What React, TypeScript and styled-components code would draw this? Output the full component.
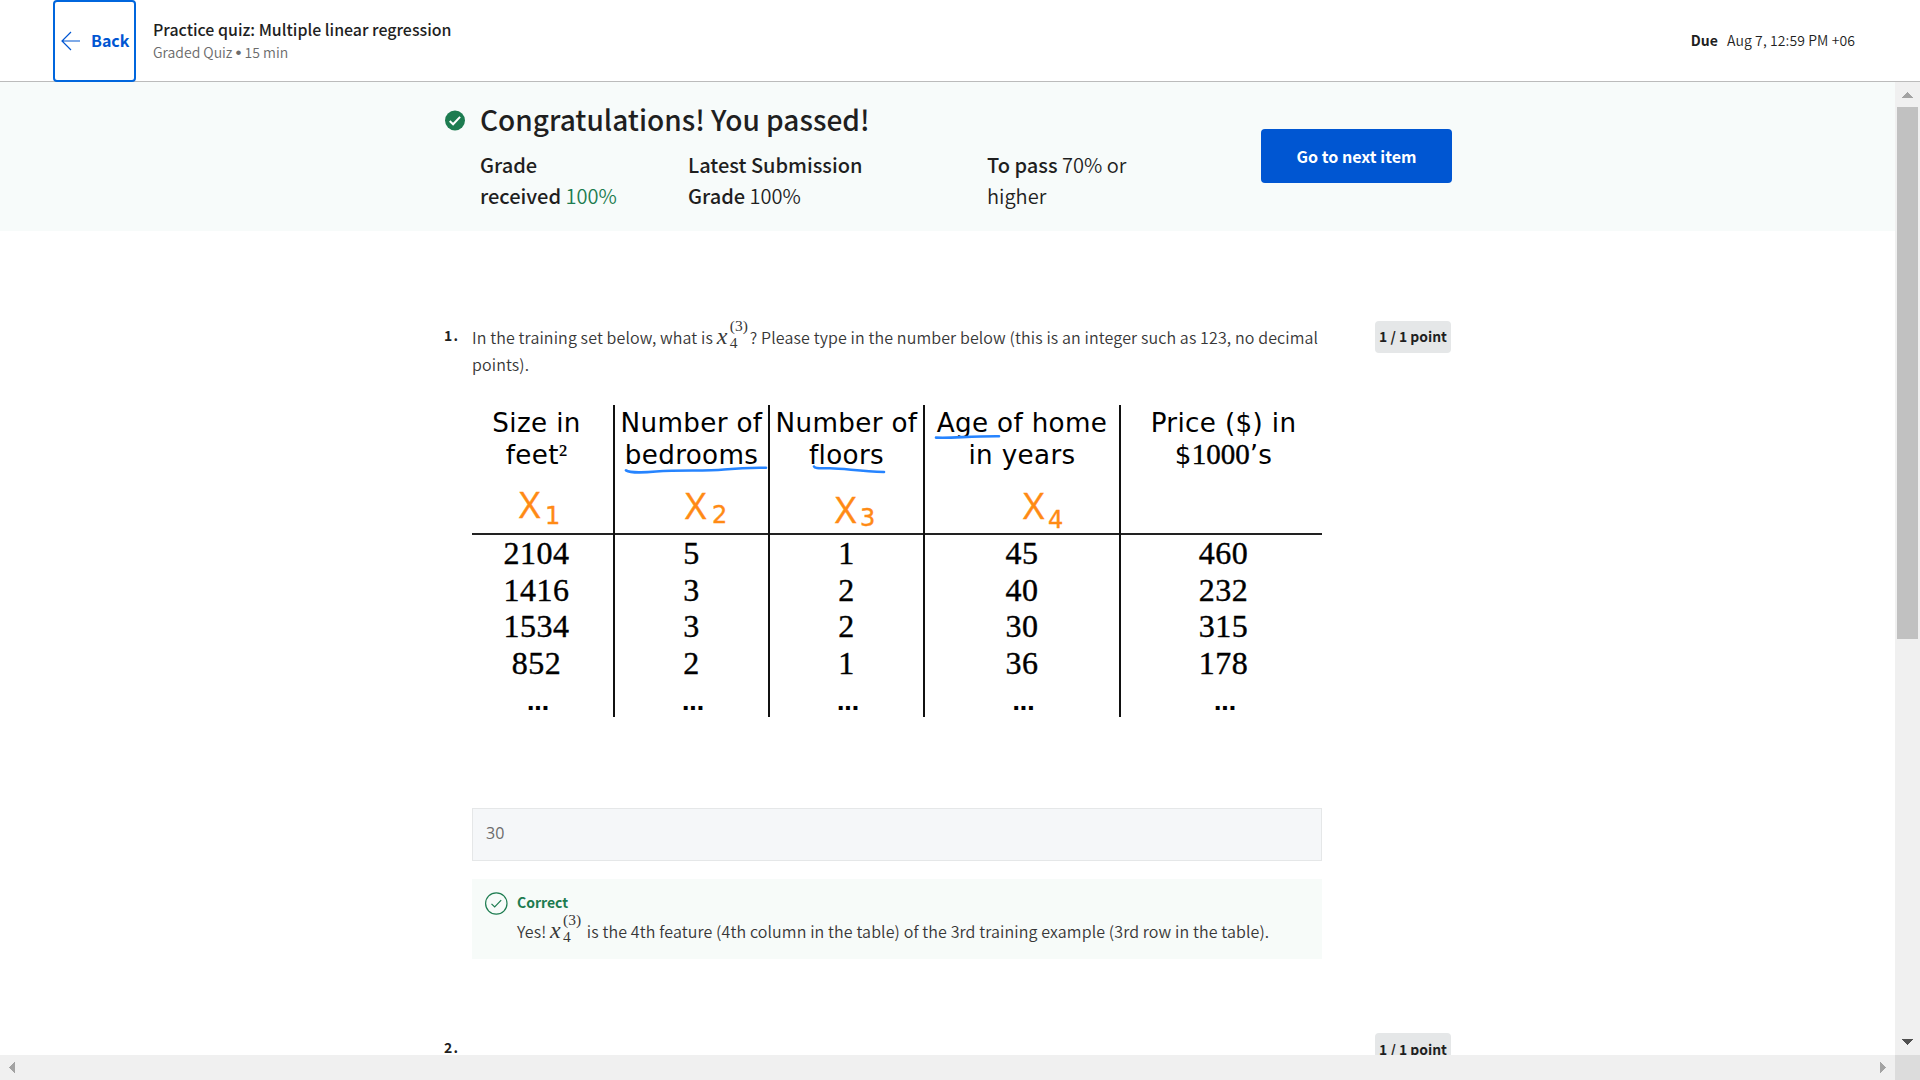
import React from "react";
import styled, { createGlobalStyle } from "styled-components";

const sans = `"Noto Sans CJK SC", "Noto Sans", sans-serif`;
const figure = `"DejaVu Sans", Verdana, sans-serif`;
const serif = `"Liberation Serif", "Times New Roman", serif`;

const GlobalStyle = createGlobalStyle`
  * { box-sizing: border-box; }
  html, body { margin: 0; padding: 0; overflow: hidden; background: #fff; }
  body { font-family: ${sans}; color: #1f1f1f; }
`;

const Page = styled.div`
  width: 1920px;
  height: 1080px;
  display: flex;
  flex-direction: column;
  overflow: hidden;
`;

const Header = styled.header`
  flex: none;
  height: 82px;
  display: flex;
  align-items: center;
  padding: 0 65px 0 53px;
  border-bottom: 1px solid #bbbbbb;
`;

const BackButton = styled.button`
  width: 83px;
  height: 82px;
  margin: 0 17px -1px 0;
  padding: 0 0 1px 6px;
  display: flex;
  align-items: center;
  gap: 10px;
  background: #fff;
  border: 2px solid #0066dd;
  border-radius: 4px;
  color: #0056d2;
  font: 700 16px/23px ${sans};
`;

const Titles = styled.div`
  flex: 1;
`;

const QuizTitle = styled.div`
  font-size: 15.95px;
  line-height: 24px;
  font-weight: 500;
`;

const QuizMeta = styled.div`
  font-size: 14px;
  line-height: 23px;
  color: #6b6b6b;
  font-weight: 350;
`;

const Bullet = styled.span`
  font-family: "Liberation Sans", sans-serif;
  font-size: 17px;
  line-height: 0;
`;

const Due = styled.div`
  display: flex;
  gap: 9px;
  padding-bottom: 1px;
  font-size: 14px;
  line-height: 24px;
  font-weight: 350;
  letter-spacing: 0.1px;
`;

const Strong = styled.strong`
  font-weight: 700;
`;

const Workspace = styled.div`
  flex: 1;
  min-height: 0;
  display: grid;
  grid-template-columns: 1895px 25px;
  grid-template-rows: 973px 25px;
`;

const Viewport = styled.main`
  overflow: hidden;
`;

const Banner = styled.section`
  height: 149px;
  display: flex;
  align-items: center;
  padding: 0 0 1px 445px;
  background: #f7fbfa;
`;

const BannerIcon = styled.div`
  width: 20px;
  height: 110px;
  margin-right: 15px;
  padding-top: 9px;
  svg { display: block; }
`;

const BannerBody = styled.div`
  width: 781px;
`;

const BannerTitle = styled.h1`
  margin: -1px 0 12px;
  font-size: 28.04px;
  line-height: 36px;
  font-weight: 500;
`;

const Grades = styled.div`
  display: grid;
  grid-template-columns: 208px 299px 200px;
  font-size: 20.05px;
  line-height: 31px;
  font-weight: 350;
`;

const GradeLabel = styled.span`
  font-weight: 500;
`;

const Passed = styled.span`
  color: #1d7c50;
`;

const NextButton = styled.button`
  width: 191px;
  height: 54px;
  padding: 0;
  border: 0;
  border-radius: 4px;
  background: #0056d2;
  color: #fff;
  font: 700 16.1px/24px ${sans};
`;

const Question = styled.section<{ $top: number }>`
  display: grid;
  grid-template-columns: 28px 850px 53px 76px;
  padding: ${(p) => p.$top}px 0 0 444px;
`;

const QuestionNumber = styled.div`
  padding-top: 2px;
  font-size: 14px;
  line-height: 24px;
  font-weight: 700;
  letter-spacing: 1.2px;
`;

const Badge = styled.div<{ $line?: number }>`
  grid-column: 4;
  height: 32px;
  border-radius: 4px;
  background: #e5e7e8;
  text-align: center;
  font-size: 13.9px;
  line-height: ${(p) => p.$line ?? 31}px;
  font-weight: 700;
  white-space: nowrap;
`;

const Prompt = styled.p`
  margin: 0;
  padding-top: 3px;
  font-size: 16px;
  line-height: 27px;
  font-weight: 350;
  letter-spacing: 0.12px;
  color: #373737;
`;

const MathBox = styled.span`
  display: inline-flex;
  height: 20px;
  margin: 0 2px 0 0;
  vertical-align: baseline;
  font-family: ${serif};
  letter-spacing: 0;
  line-height: 20px;
`;

const MathVar = styled.i`
  width: 13px;
  font-size: 24px;
`;

const Scripts = styled.span`
  display: inline-flex;
  flex-direction: column;
  gap: 2px;
  margin: -8px 0 -4px;
  font-size: 15.5px;
  line-height: 15px;
`;

const Figure = styled.div`
  position: relative;
  height: 312px;
  margin-top: 27px;
  display: grid;
  grid-template-columns: 143px 155px 155px 196px 201px;
  color: #000;
`;

const Column = styled.div<{ $last?: boolean }>`
  height: 312px;
  border-right: ${(p) => (p.$last ? "0" : "2px solid #111")};
  text-align: center;
`;

const ColumnHead = styled.div<{ $right: number; $left: number }>`
  height: 130px;
  padding: 3px ${(p) => p.$right}px 0 ${(p) => p.$left}px;
  border-bottom: 2px solid #222;
  font-family: ${figure};
  font-size: 26.2px;
  line-height: 31.5px;
  letter-spacing: 0.35px;
  white-space: nowrap;
`;

const SerifPart = styled.span<{ $size: number; $stroke: number }>`
  font-family: ${serif};
  font-size: ${(p) => p.$size}px;
  line-height: 0;
  letter-spacing: 0;
  -webkit-text-stroke: ${(p) => p.$stroke}px #000;
`;

const Value = styled.div<{ $right: number; $left: number }>`
  height: 36.7px;
  padding-right: ${(p) => p.$right}px;
  padding-left: ${(p) => p.$left}px;
  font-family: ${serif};
  font-size: 32px;
  line-height: 36.7px;
  letter-spacing: 0.5px;
  -webkit-text-stroke: 0.4px #000;
`;

const Dots = styled.div<{ $right: number; $left: number }>`
  height: 35px;
  padding-left: ${(p) => p.$left + 2}px;
  padding-right: ${(p) => p.$right}px;
  padding-top: 3px;
  font-family: ${figure};
  font-size: 22px;
  font-weight: 700;
  line-height: 36px;
  letter-spacing: -1px;
`;

const Annotation = styled.span<{ $x: number; $y: number; $size: number; $font: string }>`
  position: absolute;
  left: ${(p) => p.$x}px;
  top: ${(p) => p.$y}px;
  color: #ff8a14;
  font-family: ${(p) => p.$font};
  font-size: ${(p) => p.$size}px;
  line-height: 30px;
  -webkit-text-stroke: 0.4px #ff8a14;
`;

const InkLines = styled.svg`
  position: absolute;
  left: 0;
  top: 0;
`;

const Answer = styled.div`
  height: 53px;
  margin-top: 91px;
  padding-left: 13px;
  border: 1px solid #e5e7e8;
  background: #f5f7f9;
  color: #6b6b6b;
  font-family: "Open Sans", sans-serif;
  font-size: 16px;
  line-height: 48px;
`;

const Feedback = styled.div`
  height: 80px;
  margin-top: 18px;
  padding: 11px 0 0 13px;
  display: flex;
  gap: 9px;
  background: #f7fbf9;
`;

const FeedbackTitle = styled.div`
  color: #1d7c50;
  font-size: 14px;
  line-height: 24px;
  font-weight: 700;
`;

const FeedbackText = styled.div`
  margin-top: 4px;
  font-size: 16px;
  line-height: 27px;
  font-weight: 350;
  letter-spacing: 0.12px;
  color: #373737;
  white-space: nowrap;
`;

const VerticalBar = styled.div`
  display: flex;
  flex-direction: column;
  align-items: center;
  background: #f0f0f0;
`;

const Thumb = styled.div`
  width: 21px;
  height: 532px;
  margin-bottom: auto;
  background: #c1c1c1;
`;

const HorizontalBar = styled.div`
  display: flex;
  justify-content: space-between;
  background: #f0f0f0;
`;

const Corner = styled.div`
  background: #dcdcdc;
`;

const X43 = () => (
  <MathBox>
    <MathVar>x</MathVar>
    <Scripts>
      <span>(3)</span>
      <span>4</span>
    </Scripts>
  </MathBox>
);

const Arrow = ({ points, color = "#a3a3a3" }: { points: string; color?: string }) => (
  <svg width="25" height="25" viewBox="0 0 25 25" shapeRendering="crispEdges">
    <polygon points={points} fill={color} />
  </svg>
);

const columns: { head: React.ReactNode; values: number[]; left: number; right: number }[] = [
  { head: <>Size in<br />feet<SerifPart $size={28} $stroke={0.1}>²</SerifPart></>, values: [2104, 1416, 1534, 852], left: 0, right: 12 },
  { head: <>Number of<br />bedrooms</>, values: [5, 3, 3, 2], left: 0, right: 0 },
  { head: <>Number of<br />floors</>, values: [1, 2, 2, 1], left: 0, right: 0 },
  { head: <>Age of home<br />in years</>, values: [45, 40, 30, 36], left: 0, right: 0 },
  { head: <>Price ($) in<br />$<SerifPart $size={29} $stroke={0.4}>1000</SerifPart>’s</>, values: [460, 232, 315, 178], left: 4, right: 0 },
];

const marks = [
  { x: 47, y: 84, n: "1", nx: 73, ny: 96 },
  { x: 213, y: 85, n: "2", nx: 240, ny: 95 },
  { x: 363, y: 89, n: "3", nx: 388, ny: 98 },
  { x: 551, y: 85, n: "4", nx: 576, ny: 100 },
];

export default function App() {
  return (
    <Page>
      <GlobalStyle />
      <Header>
        <BackButton>
          <svg width="20" height="20" viewBox="0 0 20 20" fill="none" stroke="#0056d2" strokeWidth="1.2">
            <path d="M19 10H1M10 1L1 10l9 9" />
          </svg>
          Back
        </BackButton>
        <Titles>
          <QuizTitle>Practice quiz: Multiple linear regression</QuizTitle>
          <QuizMeta>Graded Quiz <Bullet>•</Bullet> 15 min</QuizMeta>
        </Titles>
        <Due>
          <Strong>Due</Strong>
          <span>Aug 7, 12:59 PM +06</span>
        </Due>
      </Header>
      <Workspace>
        <Viewport>
          <Banner>
            <BannerIcon>
              <svg width="20" height="21" viewBox="0 0 20 21">
                <circle cx="10" cy="10.5" r="10" fill="#1d7c50" />
                <path d="M4.7 11l3.4 3.3 7-7.4" fill="none" stroke="#fff" strokeWidth="2" />
              </svg>
            </BannerIcon>
            <BannerBody>
              <BannerTitle>Congratulations! You passed!</BannerTitle>
              <Grades>
                <div><GradeLabel>Grade<br />received</GradeLabel> <Passed>100%</Passed></div>
                <div><GradeLabel>Latest Submission<br />Grade</GradeLabel> 100%</div>
                <div><GradeLabel>To pass</GradeLabel> 70% or<br />higher</div>
              </Grades>
            </BannerBody>
            <NextButton>Go to next item</NextButton>
          </Banner>

          <Question $top={90}>
            <QuestionNumber>1.</QuestionNumber>
            <div>
              <Prompt>
                In the training set below, what is <X43 />? Please type in the number below (this is an integer such as 123, no decimal points).
              </Prompt>
              <Figure>
                {columns.map((c, i) => (
                  <Column key={i} $last={i === 4}>
                    <ColumnHead $left={c.left} $right={c.right}>{c.head}</ColumnHead>
                    {c.values.map((v, j) => (
                      <Value key={j} $left={c.left} $right={c.right}>{v}</Value>
                    ))}
                    <Dots $left={c.left} $right={c.right}>...</Dots>
                  </Column>
                ))}
                <InkLines width="850" height="130" viewBox="0 0 850 130" fill="none" stroke="#2684ff" strokeWidth="2.6" strokeLinecap="round" strokeLinejoin="round">
                  <path d="M154 65.300C158 68 174 67.500 184 66.500C210 64.500 232 66.500 252 64.500C268 63 280 62.500 294 62.800" />
                  <path d="M342 61.500C343 64 349 63 358 63.300C372 63.500 386 66 412 67" />
                  <path d="M464 32.600C480 33.500 497 31 527 31.200" />
                </InkLines>
                {marks.map((m) => (
                  <React.Fragment key={m.n}>
                    <Annotation $x={m.x} $y={m.y} $size={37} $font={`"Open Sans", sans-serif`}>X</Annotation>
                    <Annotation $x={m.nx} $y={m.ny} $size={24} $font={figure}>{m.n}</Annotation>
                  </React.Fragment>
                ))}
              </Figure>
              <Answer>30</Answer>
              <Feedback>
                <svg width="23" height="25" viewBox="0 0 23 25" fill="none" stroke="#1d7c50" strokeWidth="1.2">
                  <circle cx="11.300" cy="13.500" r="10.700" />
                  <path d="M6.500 13.800l3.200 3.200 6.500-6.800" />
                </svg>
                <div>
                  <FeedbackTitle>Correct</FeedbackTitle>
                  <FeedbackText>
                    Yes! <X43 /> is the 4th feature (4th column in the table) of the 3rd training example (3rd row in the table).
                  </FeedbackText>
                </div>
              </Feedback>
            </div>
            <Badge>1 / 1 point</Badge>
          </Question>

          <Question $top={74}>
            <QuestionNumber>2.</QuestionNumber>
            <Badge $line={33}>1 / 1 point</Badge>
          </Question>
        </Viewport>
        <VerticalBar>
          <Arrow points="7,16 18,16 12.5,10" />
          <Thumb />
          <Arrow points="7,9 18,9 12.5,15" color="#505050" />
        </VerticalBar>
        <HorizontalBar>
          <Arrow points="15,7 15,18 9,12.5" />
          <Arrow points="10,7 10,18 16,12.5" />
        </HorizontalBar>
        <Corner />
      </Workspace>
    </Page>
  );
}
